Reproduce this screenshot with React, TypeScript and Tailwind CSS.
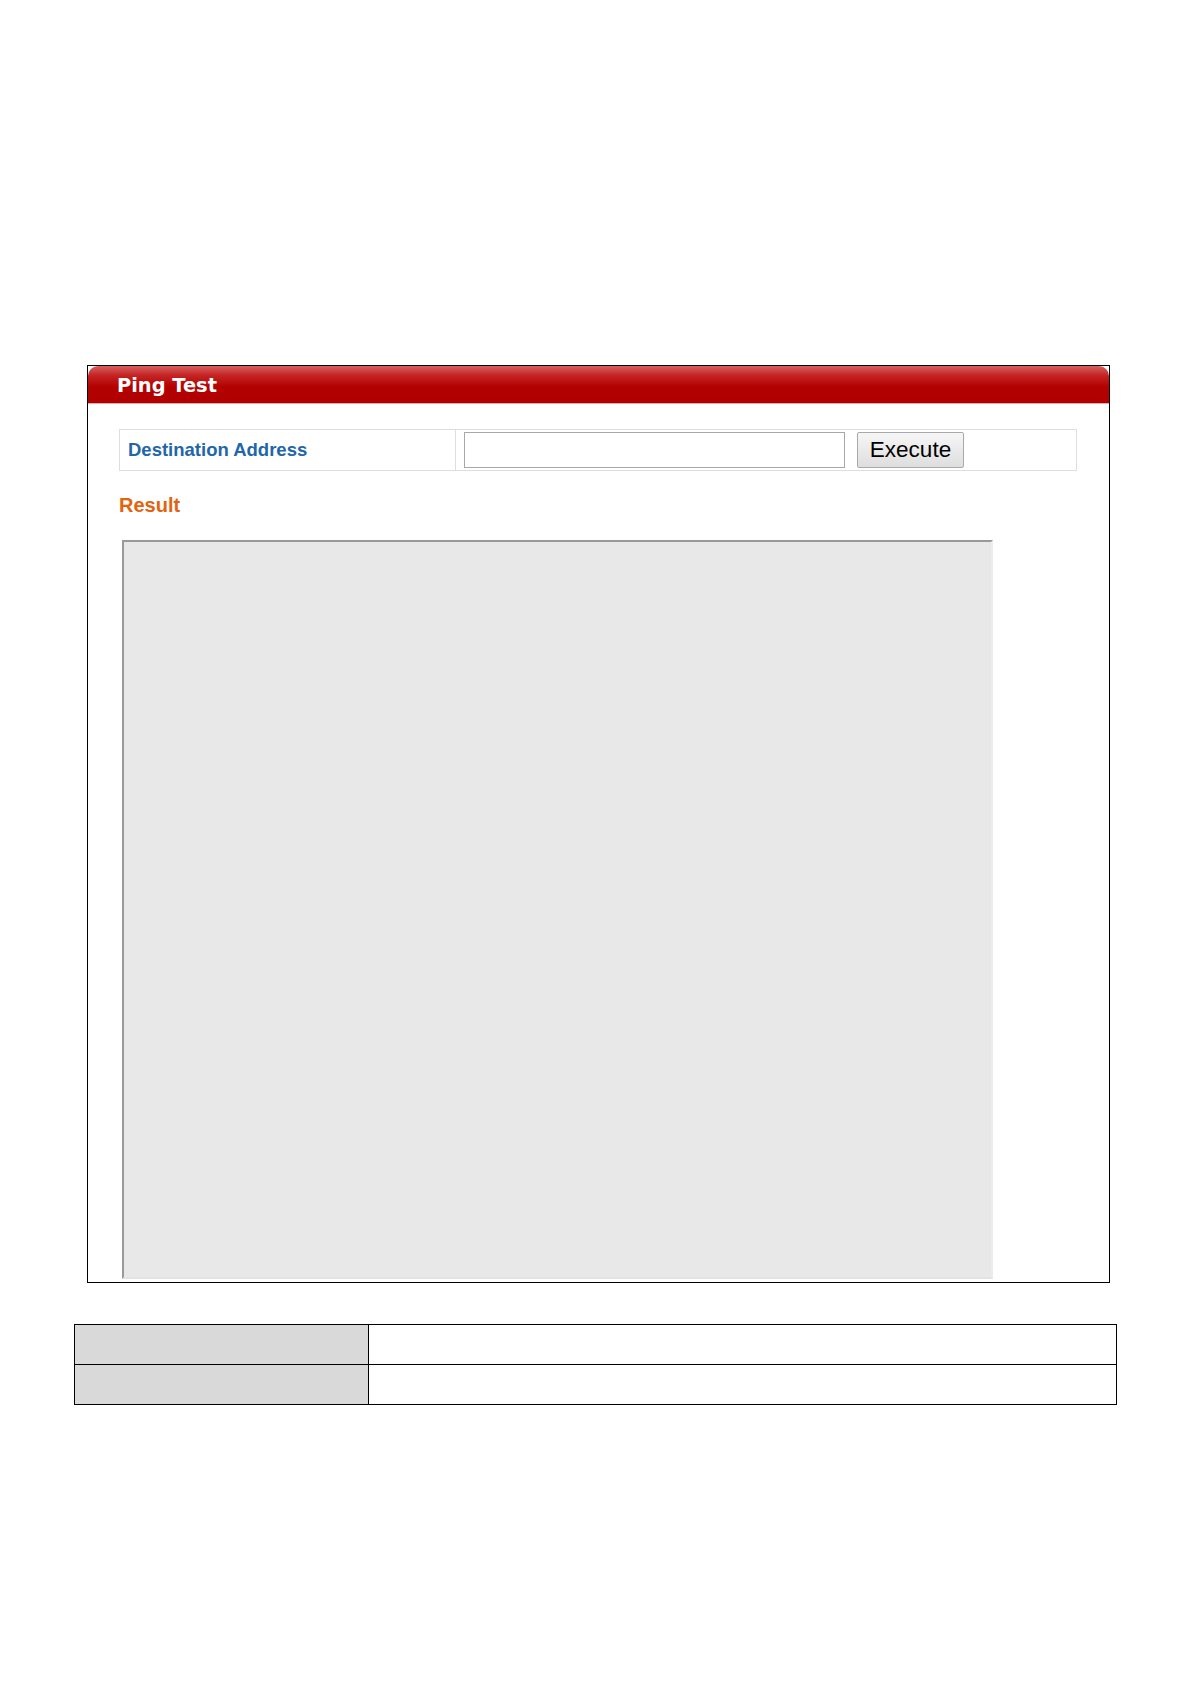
import React from "react";

const arial = { fontFamily: '"Liberation Sans", Arial, sans-serif' };

const App = () => {
  return (
    <div className="w-[1191px] min-h-[1684px] bg-white pt-[365px]" style={arial}>
      <div className="ml-[87px] w-[1023px] border border-black pb-[3px]">
        <div className="h-[38px] rounded-t-[10px] bg-[linear-gradient(to_bottom,#d86060_0%,#c52525_25%,#b40202_55%,#b00000_100%)] border-b border-[#e9a9a9] pl-[29px] flex items-center">
          <h1 className="text-white font-bold text-[19.4px] leading-none pt-[2px]" style={{ fontFamily: '"DejaVu Sans", Verdana, sans-serif' }}>
            Ping Test
          </h1>
        </div>

        <div className="pl-[31px] pt-[25px]">
          <div className="w-[958px] h-[42px] flex border border-[#dedede]">
            <div className="w-[336px] border-r border-[#dedede] flex items-center pl-[8px]">
              <span className="text-[18.5px] font-bold text-[#2266aa]">Destination Address</span>
            </div>
            <div className="flex-1 flex items-center pl-[8px] gap-[12px]">
              <input type="text" className="w-[381px] h-[36px] border border-[#a8a8a8] bg-white outline-none" />
              <button className="w-[107px] h-[36px] border border-[#a9a9a9] rounded-[2px] bg-[linear-gradient(to_bottom,#f6f6f6,#dedede)] text-[22.5px] text-black leading-none">
                Execute
              </button>
            </div>
          </div>

          <div className="mt-[23px] text-[20px] font-bold text-[#e2640f] leading-[22px]">Result</div>

          <textarea
            readOnly
            className="block mt-[24px] ml-[3px] w-[871px] h-[739px] resize-none bg-[#e8e8e8] border-2 border-t-[#999999] border-l-[#999999] border-r-[#ececec] border-b-[#e3e3e3] outline-none"
          />
        </div>
      </div>

      <table className="mt-[41px] ml-[74px] w-[1043px] border-collapse">
        <tbody>
          <tr className="h-[40px]">
            <td className="w-[294px] border border-black bg-[#d9d9d9]"></td>
            <td className="border border-black"></td>
          </tr>
          <tr className="h-[40px]">
            <td className="w-[294px] border border-black bg-[#d9d9d9]"></td>
            <td className="border border-black"></td>
          </tr>
        </tbody>
      </table>
    </div>
  );
};

export default App;
